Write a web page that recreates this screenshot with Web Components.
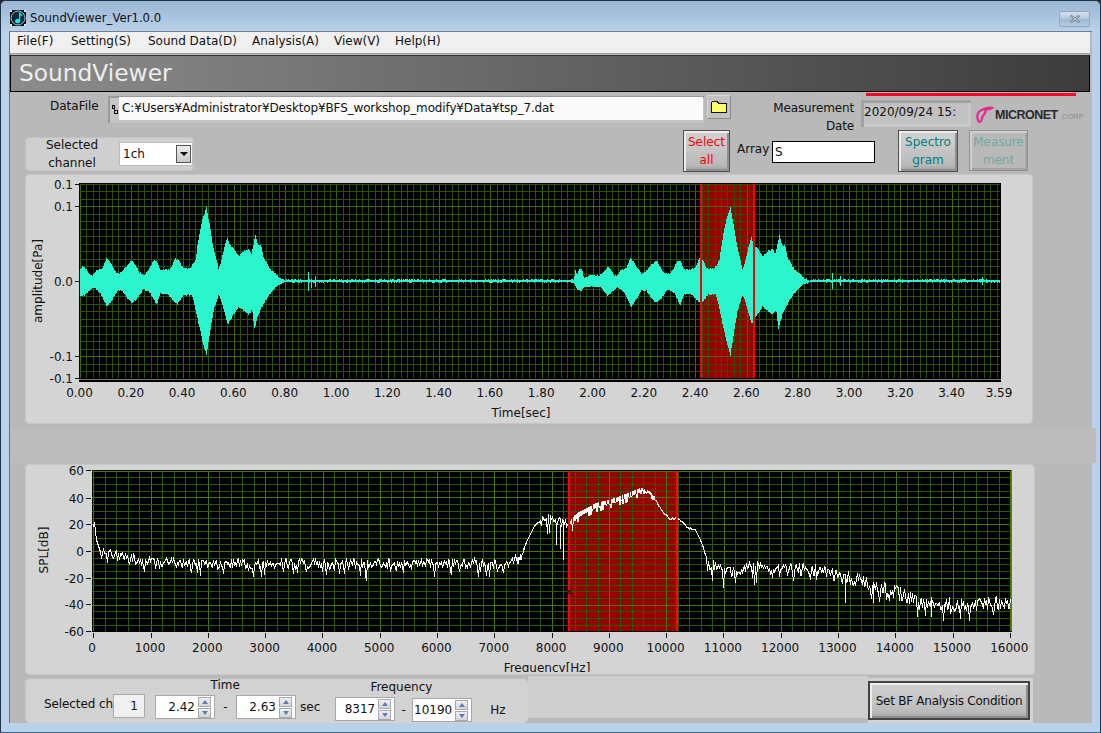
<![CDATA[<!DOCTYPE html>
<html><head><meta charset="utf-8">
<style>
html,body{margin:0;padding:0;width:1101px;height:733px;overflow:hidden;background:#1d2b3a;font-family:"DejaVu Sans",sans-serif;font-size:12px;color:#000}
</style></head>
<body><sv-window><sv-titlebar slot="title">SoundViewer_Ver1.0.0</sv-titlebar><sv-menubar slot="menu"><sv-menu w="54">File(F)</sv-menu><sv-menu w="77">Setting(S)</sv-menu><sv-menu w="104">Sound Data(D)</sv-menu><sv-menu w="82">Analysis(A)</sv-menu><sv-menu w="61">View(V)</sv-menu><sv-menu w="60">Help(H)</sv-menu></sv-menubar><sv-banner slot="banner">SoundViewer</sv-banner><sv-panel slot="panel"></sv-panel></sv-window>
<script>
function def(name, css, html, init){
  customElements.define(name, class extends HTMLElement{
    constructor(){super();this.attachShadow({mode:'open'}).innerHTML='<style>'+css+'</style>'+html.replace(/>\s+</g,'><');}
    connectedCallback(){ if(init&&!this._i){this._i=1;init.call(this,this.shadowRoot);} }
  });
}
def('sv-window',`:host{display:block;width:1101px;height:733px;box-sizing:border-box;background:#b9d1ea;border-radius:6px 6px 0 0;border:1px solid #22344a;border-bottom:1px solid #2f6f8f;overflow:hidden}
.t{height:30px}.c{margin:0 8px 0 8px;border-top:1px solid #6f7f90;border-left:1px solid #707070;width:1083px;background:#b9b9b9;height:692px;box-sizing:border-box}
.m{background:#f0f0f0;height:21px;border-bottom:1px solid #a0a0a0;margin-right:2px}
.b{margin:1px 2px 0 0}`,
`<div class="t"><slot name="title"></slot></div><div class="c"><div class="m"><slot name="menu"></slot></div><div class="b"><slot name="banner"></slot></div><slot name="panel"></slot></div>`);
def('sv-titlebar',`:host{display:flex;align-items:center;height:30px;background:linear-gradient(#9ab6d4,#b9d1ea);padding-left:9px;position:relative;font-size:11.7px;color:#111;padding-top:3px;box-sizing:border-box}
svg{margin-right:4px;flex:none}.x{position:absolute;left:1058px;top:10px;width:31px;height:16px;border:1px solid #8fa6c0;border-radius:2px;box-sizing:border-box;background:linear-gradient(#d3dfed 0,#b8cbe0 45%,#a0b8d2 50%,#b4c9df 100%);display:flex;align-items:center;justify-content:center}`,
`<svg width="16" height="16" viewBox="0 0 16 16"><rect width="16" height="16" fill="#111"/><path d="M0 0h2v2H0zM14 0h2v2h-2zM0 14h2v2H0zM14 14h2v2h-2z" fill="#dfe7ef"/><circle cx="8" cy="8" r="7" fill="#0a2a3a" stroke="#bfe9f2" stroke-width=".8"/><path d="M9 2.5h1.6c.3 1.5 1.2 2 2 3l-.8.8-1.5-1.2V11a2.6 2.2 0 1 1-1.3-1.9z" fill="#22dfea"/></svg><slot></slot><div class="x"><svg style="margin:0" width="14" height="10" viewBox="0 0 14 10"><path d="M2.5 1.5l9 7M11.5 1.5l-9 7" stroke="#5a6a7c" stroke-width="2.2" fill="none"/><path d="M2.5 1.5l9 7M11.5 1.5l-9 7" stroke="#eef3f8" stroke-width=".8" fill="none"/></svg></div>`);
def('sv-menubar',`:host{display:flex;height:18px;padding-left:7px;align-items:center}`,`<slot></slot>`);
def('sv-menu',`:host{display:block;font-size:12px;color:#111;white-space:nowrap}`,`<slot></slot>`,function(){this.style.width=this.getAttribute('w')+'px';});
def('sv-banner',`:host{display:flex;align-items:center;height:37px;box-sizing:border-box;border:1px solid #000;border-top-color:#333;background:linear-gradient(90deg,#8c8c8c,#3c3c3c);color:#eee;font-size:23.3px;padding:0 0 2px 8px;white-space:nowrap}`,`<slot></slot>`);
def('sv-button',`:host{display:flex;box-sizing:border-box;align-items:center;justify-content:center;text-align:center;line-height:18px;font-size:12px;border:1px solid #4f4f4f;background:linear-gradient(#c9c9c9,#cfcfcf 15%,#b9b9b9 85%,#9d9d9d);box-shadow:inset 2px 2px 0 #ececec,inset -2px -2px 0 #8f8f8f;white-space:pre-line}
:host([off]){border-color:#8f8f8f;background:#b9b9b9;box-shadow:inset 2px 2px 0 #cfcfcf,inset -2px -2px 0 #a4a4a4}`,`<slot></slot>`);
def('sv-numeric',`:host{display:flex;box-sizing:border-box;width:60px;height:24px;background:#fff;border:1px solid #a8a8a8;align-items:center;box-shadow:inset 0 0 0 1px #fff;font-size:12px}
.v{flex:1;text-align:right;padding-right:3px}.s{width:13px;display:flex;flex-direction:column;gap:1px;margin-right:3px}
.s i{display:flex;height:10px;align-items:center;justify-content:center;background:linear-gradient(#eef0f4,#d2d6dc);border:1px solid #a8a8a8;box-sizing:border-box}
.up{width:0;height:0;border:3.5px solid transparent;border-bottom:4px solid #5f7cb0;border-top:0}.dn{width:0;height:0;border:3.5px solid transparent;border-top:4px solid #5f7cb0;border-bottom:0}`,
`<div class="v"><slot></slot></div><div class="s"><i><b class="up"></b></i><i><b class="dn"></b></i></div>`);
def('sv-logo',`:host{display:flex;align-items:flex-end;width:108px;height:18px;white-space:nowrap;font-family:"Liberation Sans",sans-serif}
.n{font-weight:bold;font-size:12.5px;color:#2a2a2a;letter-spacing:-.5px;margin-left:0;line-height:15px}.c{font-size:7.5px;color:#8a8a8a;margin-left:4px;line-height:13px;letter-spacing:.1px}svg{flex:none}`,
`<svg width="19" height="17" viewBox="0 0 19 17"><path d="M2.5 15.5C.3 11 1.2 6 5.5 4 9 2.5 10.5 4.5 8.8 7.2 7.5 9.3 6 10.5 5.8 13 5.6 15 4 16.5 2.5 15.5Z" fill="none" stroke="#e0308c" stroke-width="2.3"/><path d="M6.5 2.8C9.5.2 14.5-.3 18.5 1.5 16 4 12.5 5 9.5 4.4" fill="#e0308c"/></svg><span class="n">MICRONET</span><span class="c">CORP</span>`);
function rng(s){return function(){s=(s*1664525+1013904223)>>>0;return s/4294967296;};}
def('sv-plot',`:host{display:block;overflow:hidden;background:#d4d4d4;border-radius:5px;box-shadow:inset 0 0 0 1px #c6c6c6}svg{display:block}text{font-family:"DejaVu Sans",sans-serif;font-size:12px;fill:#111}`,`<svg xmlns="http://www.w3.org/2000/svg" shape-rendering="crispEdges"></svg>`,function(r){
  const t=this.getAttribute('kind'),svg=r.querySelector('svg');
  const [X,Y,W,H]=this.getAttribute('box').split(' ').map(Number);
  svg.setAttribute('viewBox',`${X} ${Y} ${W} ${H}`);svg.setAttribute('width',W);svg.setAttribute('height',H);
  this.style.width=W+'px';
  let s='';const px=v=>Math.round(v)+.5;
  const line=(a,b,c,d,col,w=1)=>`<path d="M${a} ${b}L${c} ${d}" stroke="${col}" stroke-width="${w}"/>`;
  const txt=(x,y,str,anc='middle',ex='')=>`<text x="${x}" y="${y}" text-anchor="${anc}" ${ex} text-rendering="auto" shape-rendering="auto">${str}</text>`;
  if(t==='time'){
    const L=79,R=1000,T=183,B=379;
    s+=`<rect x="${L}" y="${T}" width="${R-L+1}" height="${B-T+3}" fill="#000"/><rect x="700" y="185" width="54" height="193" fill="#990000"/>`;
    for(let i=0;i<=143;i++){const x=px(80+i*6.41);if(x<R)s+=line(x,T+2,x,B-1,i%8==0?'#416b00':'#2f5200');}
    for(let i=-13;i<=13;i++){const y=px(281+i*7.5);if(y>T&&y<B)s+=line(L+1,y,R,y,i%10==0?'#416b00':'#2f5200');}
    s+=line(L,B+.5,R+1,B+.5,'#777');
    const up=[[240,298],[247,290],[256,295],[268,315],[275,318],[290,300],[305,296],[318,265],[328,275],[340,295],[350,310],[362,308],[372,295],[395,270],[405,285],[415,305],[430,313],[445,300],[460,270],[470,275],[480,300],[510,297],[525,265],[535,272],[548,295],[570,295],[585,270],[595,200],[605,150],[618,113],[628,165],[638,230],[655,298],[665,260],[680,200],[688,225],[700,235],[715,257],[730,245],[745,235],[752,255],[765,195],[772,225],[782,225],[790,265],[800,280],[810,298],[825,310],[840,325],[855,331]];
    const lo=[[240,375],[250,378],[268,360],[280,352],[300,370],[320,410],[335,390],[350,362],[365,362],[380,385],[395,400],[410,385],[430,358],[450,370],[468,405],[480,372],[500,372],[530,403],[550,375],[575,375],[590,440],[605,510],[618,555],[628,490],[640,420],[655,372],[670,420],[682,465],[695,440],[715,410],[745,435],[755,420],[762,475],[775,430],[790,400],[810,370],[830,348],[855,337]];
    const preU=[[25,120],[30,90],[35,105],[42,85],[50,90],[55,115],[75,105],[100,108],[115,95],[128,82]];
    const preL=[[25,127],[32,145],[48,155],[55,140],[80,140],[105,142],[128,170]];
    const itp=(a,x)=>{if(x<=a[0][0])return a[0][1];for(let i=1;i<a.length;i++)if(x<=a[i][0]){const p=a[i-1],q=a[i];return p[1]+(q[1]-p[1])*(x-p[0])/(q[0]-p[0]);}return a[a.length-1][1];};
    const rn=rng(7);let d='';
    const burst=(sx)=>{const z=sx*3;return [170+itp(up,z)/3+(rn()-.5)*1.6,170+itp(lo,z)/3+(rn()-.5)*1.6];};
    for(let x=80;x<R;x++){
      let a=280,b=282;
      if(x<=285){[a,b]=burst(x);}
      else if(x>=607&&x<=809){[a,b]=burst(x-524);}
      else if(x>=573&&x<607){const z=(x-565)*3;a=240+itp(preU,z)/3+(rn()-.5);b=240+itp(preL,z)/3+(rn()-.5);}
      else{a=280+(rn()<.3?-1:0);b=282+(rn()<.2?1:0);}
      [[308,272,291],[315,276,287],[832,273,289],[840,276,286],[311,279,288],[982,277,285]].forEach(q=>{if(q[0]==x){a=q[1];b=q[2];}});
      if(x==753){a=236;b=326;}
      d+=`M${x}.5 ${Math.round(a)}V${Math.round(b)}`;
    }
    s+=`<path d="${d}" stroke="#2af5cd" fill="none"/>`;
    s+=`<rect x="700" y="184" width="2" height="194" fill="#f00"/><rect x="753" y="184" width="2" height="194" fill="#f00"/>`;
    [[184,'0.1'],[206,'0.1'],[281,'0.0'],[356,'-0.1'],[378,'-0.1']].forEach(q=>{s+=line(75,q[0]+.5,79,q[0]+.5,'#111');s+=txt(73,q[0]+4.5,q[1],'end');});
    for(let i=0;i<=17;i++){s+=txt(79.5+i*51.3,397,(i*.2).toFixed(2));}
    s+=txt(999,397,'3.59');
    s+=txt(521,417,'Time[sec]');
    s+=txt(0,0,'amplitude[Pa]','middle','transform="translate(42 281) rotate(-90)"');
  }else{
    const L=92,R=1011,T=470,B=631;
    s+=`<rect x="${L}" y="${T}" width="${R-L+1}" height="${B-T+1}" fill="#000"/><rect x="568" y="471" width="109" height="160" fill="#980000"/>`;
    for(let i=0;i<=80;i++){const x=px(93.3+i*11.46);if(x<R)s+=line(x,T+1,x,B,i%5==0?'#437a00':'#2c5a00');}
    for(let i=-12;i<=12;i++){const y=px(551+i*6.7);if(y>T&&y<B)s+=line(L,y,R-1,y,i%4==0?'#437a00':'#2c5a00');}
    const b=[[93,527],[94,522],[96,540],[100,552],[110,555],[150,561],[200,564],[300,563],[400,563],[510,564],[519,558],[527,540],[534,526],[541,520],[550,518],[561,524],[571,522],[577,515],[596,505],[615,500],[630,494],[642,489],[648,492],[653,497],[661,510],[669,519],[678,518],[688,528],[695,530],[700,540],[703,548],[707,563],[730,572],[749,567],[807,568],[837,575],[883,587],[914,600],[960,605],[1010,603]];
    const rn=rng(21),itp=x=>{for(let i=1;i<b.length;i++)if(x<=b[i][0]){const p=b[i-1],q=b[i];return p[1]+(q[1]-p[1])*(x-p[0])/(q[0]-p[0]);}return 603;};
    const amp=x=>x<101?0:x<516?5:x<524?2:x<541?.4:x<565?5:x<574?6:x<640?3:x<655?2:x<690?.6:x<706?.3:x<840?5.5:7;
    const pts=[];
    for(let x=93;x<=1010;x+=1){let y=itp(x),a=amp(x);
      const dense=a>=2&&a<5;
      for(let k=0;k<(dense?2:1);k++){let n=(rn()-.5)*2*a;const q=rn();
        if(a>=5&&q<.12)n+=a*1.1+rn()*5; if(a>=5&&q>.97)n+=8+rn()*8;
        if(dense)n=(k?1:-1)*a*.7+(q<.2?a*1.5:0);
        pts.push([x+k*.5+.5,Math.round(y+n)]);}
    }
    let d='M'+pts.map(p=>p.join(' ')).join('L');
    d+='M563.5 520V560M556.5 525V545M560.5 525V549M845.5 575V603M873.5 585V603M931.5 600V617';
    s+=`<path d="${d}" stroke="#fff" stroke-width="1" fill="none"/>`;
    s+=`<rect x="568" y="471" width="2" height="160" fill="#f00"/><rect x="676" y="471" width="2" height="160" fill="#f00"/><path d="M567.5 589.5l4 5M571.5 589.5l-4 5" stroke="#000" shape-rendering="auto"/>`;
    s+=line(1011.5,T,1011.5,B,'#666');
    [[60,470],[40,498],[20,524],[0,551],[-20,578],[-40,604],[-60,631]].forEach(q=>{s+=line(86,q[1]+.5,91,q[1]+.5,'#111');s+=txt(84,q[1]+4.5,q[0],'end');});
    for(let i=0;i<=16;i++){const x=93.3+i*57.28;s+=line(px(x),633,px(x),638,'#111');s+=txt(i==0?92:x-.5,652,i*1000);}
    s+=txt(547,672,'Frequency[Hz]');
    s+=txt(0,0,'SPL[dB]','middle','transform="translate(48 550) rotate(-90)"');
  }
  svg.innerHTML=s;
});
def('sv-panel',`:host{display:block;font-size:12px;height:631px;color:#111}
.red{width:210px;height:3px;background:#ff0028;margin:1px 0 0 856px}
.row{display:flex;align-items:flex-start;white-space:nowrap}
.r1{height:34px}.r2{height:44px}
.lb{margin:3px 0 0 40px;width:52px}
.path{margin:0 0 0 6px;width:596px;height:27px;box-sizing:border-box;background:#c6c6c6;box-shadow:inset 2px 2px 0 #9a9a9a,inset 0 -3px 0 #c4c4c4;display:flex;padding:1px 1px 3px 2px}
.path i{width:9px;font-style:normal;display:flex;align-items:center;justify-content:center}.path div{flex:1;background:#fafafa;padding-left:3px;line-height:22px;letter-spacing:-.14px}
.fold{margin:-1px 0 0 3px;width:24px;height:24px;box-sizing:border-box;background:#c2c2c2;border:1px solid #8a8a8a;border-left-color:#d8d8d8;border-top-color:#d8d8d8;display:flex;align-items:center;justify-content:center}
.meas{margin:3px 0 0 23px;width:100px;text-align:right;line-height:18px;white-space:normal;letter-spacing:-.15px}
.date{margin:4px 0 0 7px;width:110px;height:27px;box-sizing:border-box;background:#c2c2c2;box-shadow:inset 3px 3px 0 #a2a2a2,inset -3px -3px 0 #c8c8c8;padding-left:3px;line-height:25px}
sv-logo{margin:9px 0 0 5px}
.sel{margin:7px 0 0 15px;width:169px;height:34px;box-sizing:border-box;background:#cfcfcf;border-radius:5px;display:flex;align-items:center;box-shadow:inset 0 0 0 1px #c2c2c2}
.sel span{width:94px;text-align:center;line-height:18px;white-space:pre-line}
.dd{width:74px;height:24px;box-sizing:border-box;background:#fff;border:1px solid #bbb;display:flex;align-items:center;justify-content:space-between;padding-left:3px}
.dd b{width:15px;height:18px;margin-right:1px;box-sizing:border-box;border:1px solid #555;background:linear-gradient(#eee,#c8c8c8);display:flex;align-items:center;justify-content:center}
.dd b i{width:0;height:0;border:4px solid transparent;border-top:4px solid #000;border-bottom:0}
.arr{margin:12px 0 0 7px;width:35px}
.inp{margin:11px 0 0 0;width:103px;height:22px;box-sizing:border-box;border:1px solid #000;background:#fff;padding-left:2px;line-height:20px}
.band{height:35px;width:1086px;background:#bcbcbc;margin-top:4px}
.bot{display:flex;align-items:flex-start;margin-top:2px;margin-left:15px}
.ctl{width:503px;height:45px;box-sizing:border-box;background:#d2d2d2;border-radius:5px;display:flex;align-items:flex-start;box-shadow:inset 0 1px 0 #bdbdbd,inset 1px 0 0 #c4c4c4}
.fill{width:340px;height:42px;background:#cecece;margin-top:-2px}
.btnw{width:165px;height:45px;background:#d2d2d2;padding:3px 0 0 0;box-sizing:border-box}
.g{display:flex;flex-direction:column}.g .h{text-align:center;line-height:14px}
.g .n{display:flex;align-items:flex-start}`,
`<div class="red"></div>
<div class="row r1"><div class="lb">DataFile</div>
 <div class="path"><i><svg width="7" height="10" viewBox="0 0 7 10"><path d="M1.5 1h2v3h-2zM3.5 6h3v3h-3zM3 4v2" fill="none" stroke="#111" shape-rendering="crispEdges"/></svg></i><div>C:¥Users¥Administrator¥Desktop¥BFS_workshop_modify¥Data¥tsp_7.dat</div></div>
 <div class="fold"><svg width="18" height="14" viewBox="0 0 18 14"><path d="M1.5 12.5V2.5L3 1h4l1.5 2h8v9.5z" fill="#ffff66" stroke="#111" shape-rendering="crispEdges"/></svg></div>
 <div class="meas">Measurement Date</div><div class="date">2020/09/24 15:</div><sv-logo></sv-logo></div>
<div class="row r2"><div class="sel"><span>Selected
channel</span><div class="dd">1ch<b><i></i></b></div></div>
 <sv-button style="margin-left:489px;width:47px;height:42px;color:#f00">Select
all</sv-button><div class="arr">Array</div><div class="inp">S</div>
 <sv-button style="margin-left:23px;width:60px;height:42px;color:#007f7f">Spectro
gram</sv-button><sv-button off style="margin-left:11px;width:59px;height:41px;color:#6fa8a4;letter-spacing:-.1px">Measure
ment</sv-button></div>
<sv-plot kind="time" box="25 174 1008 250" style="margin-left:15px;height:250px"></sv-plot>
<div class="band"></div>
<sv-plot kind="freq" box="25 464 1010 208" style="margin:1px 0 3px 15px;height:208px;padding-bottom:3px"></sv-plot>
<div class="bot"><div class="ctl">
  <div style="margin:19px 0 0 19px;width:69px;white-space:nowrap;letter-spacing:-.1px">Selected ch</div>
  <div style="margin:16px 0 0 0;width:32px;height:24px;box-sizing:border-box;background:#f0f0f0;border:1px solid #aaa;text-align:right;padding-right:6px;line-height:22px">1</div>
  <div class="g" style="margin-left:10px"><div class="h" style="padding-right:25px">Time</div><div class="n" style="margin-top:3px"><sv-numeric>2.42</sv-numeric><span style="width:21px;text-align:center;margin-top:5px">-</span><sv-numeric>2.63</sv-numeric><span style="margin:5px 0 0 4px">sec</span></div></div>
  <div class="g" style="margin:2px 0 0 15px"><div class="h" style="padding-right:38px">Frequency</div><div class="n" style="margin-top:3px"><sv-numeric>8317</sv-numeric><span style="width:17px;text-align:center;margin-top:6px">-</span><sv-numeric style="margin-top:1px">10190</sv-numeric><span style="margin:6px 0 0 18px">Hz</span></div></div>
 </div><div class="fill"></div><div class="btnw"><sv-button style="width:162px;height:39px;border:2px solid #444;letter-spacing:-.25px">Set BF Analysis Condition</sv-button></div></div>`);
</script>
</body></html>]]>
